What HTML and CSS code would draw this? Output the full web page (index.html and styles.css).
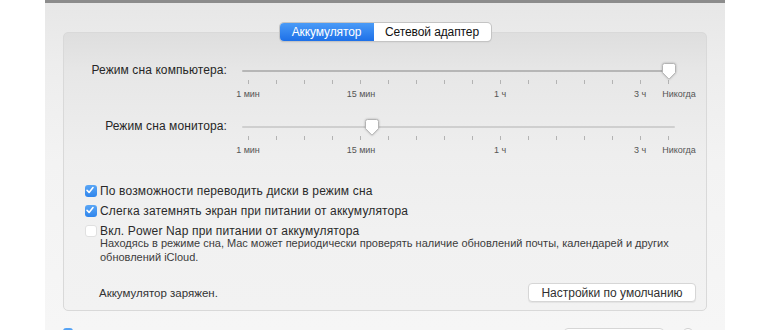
FILE: index.html
```html
<!DOCTYPE html>
<html lang="ru">
<head>
<meta charset="utf-8">
<title>Экономия энергии</title>
<link rel="stylesheet" href="styles.css">
</head>
<body>
<div class="window">
  <div class="seg-wrap">
    <div class="seg">
      <div class="seg-btn active">Аккумулятор</div>
      <div class="seg-btn">Сетевой адаптер</div>
    </div>
  </div>
  <div class="panel">
    <div class="slider-row">
      <div class="slider-label">Режим сна компьютера:</div>
      <div class="slider">
        <div class="track track-dark"></div>
        <div class="ticks">
          <i></i><i></i><i></i><i></i><i></i><i></i><i></i><i></i><i></i><i></i><i></i><i></i><i></i><i></i><i></i><i></i>
        </div>
        <div class="tick-labels">
          <span style="left:6px">1 мин</span>
          <span style="left:119px">15 мин</span>
          <span style="left:258px">1 ч</span>
          <span style="left:398px">3 ч</span>
          <span style="left:437px">Никогда</span>
        </div>
        <svg class="knob" style="left:420px" width="14" height="17" viewBox="0 0 14 17"><path d="M2.5 0.5H11.5Q13.5 0.5 13.5 2.5V9.6L7 16.2L0.5 9.6V2.5Q0.5 0.5 2.5 0.5Z" fill="#fff" stroke="#b4b4b4" stroke-width="1"/></svg>
      </div>
    </div>
    <div class="slider-row second">
      <div class="slider-label">Режим сна монитора:</div>
      <div class="slider">
        <div class="track"></div>
        <div class="ticks">
          <i></i><i></i><i></i><i></i><i></i><i></i><i></i><i></i><i></i><i></i><i></i><i></i><i></i><i></i><i></i><i></i>
        </div>
        <div class="tick-labels">
          <span style="left:6px">1 мин</span>
          <span style="left:119px">15 мин</span>
          <span style="left:258px">1 ч</span>
          <span style="left:398px">3 ч</span>
          <span style="left:437px">Никогда</span>
        </div>
        <svg class="knob" style="left:123px" width="14" height="17" viewBox="0 0 14 17"><path d="M2.5 0.5H11.5Q13.5 0.5 13.5 2.5V9.6L7 16.2L0.5 9.6V2.5Q0.5 0.5 2.5 0.5Z" fill="#fff" stroke="#b4b4b4" stroke-width="1"/></svg>
      </div>
    </div>

    <div class="checks">
      <div class="check-row">
        <span class="cb checked"><svg width="12" height="12" viewBox="0 0 12 12"><path d="M3 6.3L5.1 8.4L9 3.6" fill="none" stroke="#fff" stroke-width="1.6" stroke-linecap="round" stroke-linejoin="round"/></svg></span>
        <span>По возможности переводить диски в режим сна</span>
      </div>
      <div class="check-row">
        <span class="cb checked"><svg width="12" height="12" viewBox="0 0 12 12"><path d="M3 6.3L5.1 8.4L9 3.6" fill="none" stroke="#fff" stroke-width="1.6" stroke-linecap="round" stroke-linejoin="round"/></svg></span>
        <span>Слегка затемнять экран при питании от аккумулятора</span>
      </div>
      <div class="check-row">
        <span class="cb"></span>
        <span>Вкл. Power Nap при питании от аккумулятора</span>
      </div>
    </div>
    <p class="desc">Находясь в режиме сна, Mac может периодически проверять наличие обновлений почты, календарей и других<br>обновлений iCloud.</p>

    <div class="status-row">
      <span class="status">Аккумулятор заряжен.</span>
      <button class="btn">Настройки по умолчанию</button>
    </div>
  </div>
  <div class="bottom-row">
    <span class="cb checked small"></span>
    <span class="spacer"></span>
    <span class="btn ghost"></span>
    <svg class="help" width="12" height="12" viewBox="0 0 12 12"><circle cx="6" cy="6" r="5.5" fill="#fff" stroke="#cfcfcf"/><path d="M4.6 4.6Q4.8 3.2 6 3.2Q7.4 3.2 7.4 4.5Q7.4 5.4 6.2 6V7" fill="none" stroke="#4a8fe6" stroke-width="1.1" stroke-linecap="round"/></svg>
  </div>
</div>
</body>
</html>
```
FILE: styles.css
```css
html, body {
  margin: 0;
  padding: 0;
  background: #ffffff;
}
body {
  font-family: "Liberation Sans", Arial, sans-serif;
  color: #2b2b2b;
  width: 770px;
  height: 330px;
  overflow: hidden;
}
.window {
  margin-left: 45px;
  width: 680px;
  height: 327px;
  border-top: 3px solid #8c8c8c;
  background: linear-gradient(#e7e7e7 0px, #ededed 60px, #f3f3f3 160px, #f6f6f6 327px);
  overflow: hidden;
}
.seg-wrap {
  display: flex;
  justify-content: center;
  padding-top: 20px;
  margin-bottom: -9px;
  position: relative;
  z-index: 2;
}
.seg {
  display: flex;
  height: 18px;
  border-radius: 4px;
  background: #fff;
  box-shadow: 0 0 0 1px #c4c4c4, 0 1px 1.5px rgba(0,0,0,0.18);
  overflow: hidden;
}
.seg-btn {
  font-size: 12px;
  line-height: 18px;
  text-align: center;
  color: #111;
  width: 117px;
  letter-spacing: -0.1px;
}
.seg-btn.active {
  width: 94px;
  color: #fff;
  background: linear-gradient(#4a9bf7, #1d70e8);
}
.panel {
  margin: 0 18px;
  height: 248px;
  padding-top: 29px;
  border: 1px solid #d9d9d9;
  border-radius: 5px;
  background: linear-gradient(#dedede 0px, #e7e7e7 40px, #eeeeee 120px, #f1f1f1 200px, #f2f2f2 278px);
}
.slider-row {
  display: grid;
  grid-template-columns: 163px 433px;
  column-gap: 15px;
}
.slider-row.second {
  margin-top: 18px;
}
.slider-label {
  text-align: right;
  font-size: 12px;
  line-height: 14px;
  padding-top: 1px;
  color: #262626;
  letter-spacing: 0.1px;
}
.slider {
  position: relative;
  height: 38px;
}
.track {
  margin-top: 8px;
  height: 2px;
  border-radius: 1px;
  background: #cfcfcf;
}
.track-dark {
  background: #b6b6b6;
}
.ticks {
  display: flex;
  justify-content: space-between;
  margin-top: 8px;
  margin-left: 6px;
  width: 421px;
  height: 4px;
}
.ticks i {
  display: block;
  width: 1px;
  height: 4px;
  background: #b3b3b3;
}
.tick-labels {
  position: relative;
  margin-top: 5px;
  height: 11px;
}
.tick-labels span {
  position: absolute;
  top: 0;
  transform: translateX(-50%);
  font-size: 9px;
  line-height: 11px;
  color: #555;
  white-space: nowrap;
}
.knob {
  position: absolute;
  top: 1px;
  filter: drop-shadow(0 0.5px 0.8px rgba(0,0,0,0.25));
}
.checks {
  margin-top: 27px;
  margin-left: 21px;
  display: flex;
  flex-direction: column;
  gap: 4px;
}
.check-row {
  display: flex;
  align-items: center;
  gap: 3px;
  height: 16px;
  font-size: 12px;
  color: #2a2a2a;
  letter-spacing: 0.15px;
}
.cb {
  display: inline-block;
  width: 12px;
  height: 12px;
  box-sizing: border-box;
  border-radius: 3px;
  background: #fff;
  border: 1px solid #e0e0e0;
  flex: none;
}
.cb svg {
  display: block;
  margin: -1px;
}
.cb.checked {
  border: none;
  background: linear-gradient(#5aa6f5, #2f85ec);
}
.desc {
  margin: -3px 0 0 36px;
  font-size: 11px;
  line-height: 14px;
  color: #3c3c3c;
}
.status-row {
  display: flex;
  justify-content: space-between;
  align-items: center;
  margin-top: 19px;
  padding-left: 35px;
  padding-right: 10px;
  height: 19px;
}
.status {
  font-size: 11.5px;
  color: #333;
}
.btn {
  width: 168px;
  height: 19px;
  padding: 0;
  border: 1px solid #d6d6d6;
  border-radius: 4px;
  background: #fff;
  font-family: "Liberation Sans", Arial, sans-serif;
  font-size: 12px;
  color: #303030;
  box-shadow: 0 1px 1px rgba(0,0,0,0.06);
}
.bottom-row {
  display: flex;
  align-items: flex-start;
  margin-top: 17px;
  padding: 0 18px;
}
.cb.small {
  width: 10px;
  height: 10px;
}
.spacer {
  flex: 1;
}
.btn.ghost {
  display: block;
  width: 100px;
  height: 20px;
  box-sizing: border-box;
}
.help {
  display: block;
  flex: none;
  margin-left: 18px;
  margin-right: 13px;
}
```
